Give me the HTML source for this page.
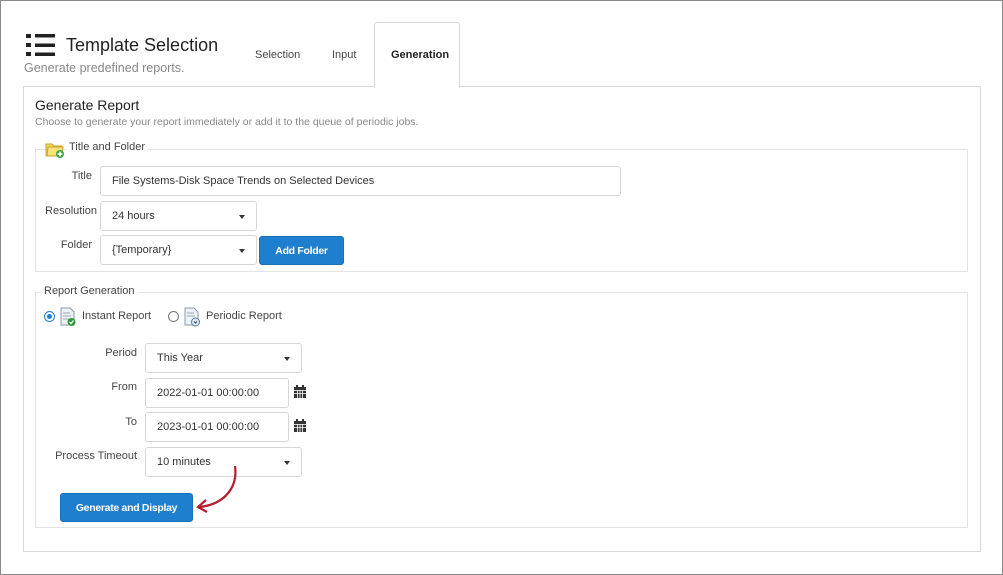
<!DOCTYPE html>
<html><head><style>
*{box-sizing:border-box;margin:0;padding:0}
body{width:1003px;height:575px;background:#fff;font-family:"Liberation Sans",sans-serif;position:relative;overflow:hidden;color:#333}
.a{position:absolute}
.frame{left:0;top:0;width:1003px;height:575px;border:1px solid #8a8a8a}
.lbl{font-size:11px;color:#444;text-align:right}
.inp{border:1px solid #d6d6d6;border-radius:3px;font-size:11px;color:#333;padding-left:11px;display:flex;align-items:center;background:#fff}
.sel::after{content:"";position:absolute;right:11px;top:13px;border:3.5px solid transparent;border-top:4px solid #333}
.btn{background:#1f7fcf;border:1px solid #1a6fb8;border-radius:3px;color:#fff;font-weight:bold;font-size:10.5px;letter-spacing:-0.3px;display:flex;align-items:center;justify-content:center}
.fs{border:1px solid #e3e3e3}
.leg{background:#fff;font-size:11px;color:#444;padding:0 3px}
</style></head><body>
<div class="a frame"></div>
<svg class="a" style="left:26px;top:34px" width="30" height="24" viewBox="0 0 30 24">
<rect x="0" y="0" width="5" height="4" fill="#222"/><rect x="9" y="0" width="20" height="3.5" fill="#222"/>
<rect x="0" y="9" width="5" height="4" fill="#222"/><rect x="9" y="9.5" width="20" height="3.5" fill="#222"/>
<rect x="0" y="18" width="5" height="4" fill="#222"/><rect x="9" y="18.5" width="20" height="3.5" fill="#222"/>
</svg>
<div class="a" style="left:66px;top:35px;font-size:18px;color:#222">Template Selection</div>
<div class="a" style="left:24px;top:61px;font-size:12.5px;color:#888">Generate predefined reports.</div>
<div class="a" style="left:255px;top:49px;font-size:11px;color:#444">Selection</div>
<div class="a" style="left:332px;top:49px;font-size:11px;color:#444">Input</div>
<div class="a" style="left:23px;top:86px;width:958px;height:466px;border:1px solid #d8d8d8"></div>
<div class="a" style="left:374px;top:22px;width:86px;height:66px;border:1px solid #d8d8d8;border-bottom:none;background:#fff;border-radius:3px 3px 0 0"></div>
<div class="a" style="left:391px;top:49px;font-size:11px;font-weight:bold;color:#222">Generation</div>
<div class="a" style="left:35px;top:97px;font-size:14px;color:#222">Generate Report</div>
<div class="a" style="left:35px;top:116px;font-size:10.5px;color:#888">Choose to generate your report immediately or add it to the queue of periodic jobs.</div>
<div class="a fs" style="left:35px;top:149px;width:933px;height:123px"></div>
<svg class="a" style="left:45px;top:140px" width="20" height="18" viewBox="0 0 20 18"><path d="M1 4h6l2 2h8v10H1z" fill="#f2d45a" stroke="#c9a52c"/><path d="M3 7h15l-1 9H2z" fill="#f8e27a" stroke="#c9a52c"/><circle cx="15" cy="14" r="4" fill="#3aa63a"/><path d="M15 11.5v5M12.5 14h5" stroke="#fff" stroke-width="1.6"/></svg>
<div class="a leg" style="left:66px;top:141px">Title and Folder</div>
<div class="a lbl" style="left:40px;top:170px;width:52px">Title</div>
<div class="a inp" style="left:100px;top:166px;width:521px;height:30px">File Systems-Disk Space Trends on Selected Devices</div>
<div class="a lbl" style="left:30px;top:205px;width:67px">Resolution</div>
<div class="a inp sel" style="left:100px;top:201px;width:157px;height:30px">24 hours</div>
<div class="a lbl" style="left:40px;top:239px;width:52px">Folder</div>
<div class="a inp sel" style="left:100px;top:235px;width:157px;height:30px">{Temporary}</div>
<div class="a btn" style="left:259px;top:236px;width:85px;height:29px">Add Folder</div>
<div class="a fs" style="left:35px;top:292px;width:933px;height:236px"></div>
<div class="a leg" style="left:41px;top:285px">Report Generation</div>
<div class="a" style="left:44px;top:311px;width:11px;height:11px;border-radius:50%;border:1px solid #1f7fcf;background:#fff"><div style="margin:2px;width:5px;height:5px;border-radius:50%;background:#1f7fcf"></div></div>
<svg class="a" style="left:59px;top:307px" width="18" height="20" viewBox="0 0 18 20"><path d="M2 1h9l4 4v13H2z" fill="#eef2f7" stroke="#8a98aa"/><path d="M4 6h7M4 9h8M4 12h6" stroke="#9aa"/><circle cx="12.5" cy="15" r="4" fill="#2a9a3a"/><path d="M10.5 15l1.5 1.5 2.5-3" stroke="#fff" stroke-width="1.3" fill="none"/></svg>
<div class="a" style="left:82px;top:310px;font-size:11px;color:#444">Instant Report</div>
<div class="a" style="left:168px;top:311px;width:11px;height:11px;border-radius:50%;border:1px solid #777;background:#fff"></div>
<svg class="a" style="left:183px;top:307px" width="18" height="20" viewBox="0 0 18 20"><path d="M2 1h9l4 4v13H2z" fill="#eef2f7" stroke="#8a98aa"/><path d="M4 6h7M4 9h8" stroke="#9aa"/><circle cx="12.5" cy="15" r="4" fill="#dfe8f3" stroke="#5a7aa0"/><path d="M11 14.5l1.5 1.5 1.5-1.5" stroke="#345" fill="none"/></svg>
<div class="a" style="left:206px;top:310px;font-size:11px;color:#444">Periodic Report</div>
<div class="a lbl" style="left:60px;top:347px;width:77px">Period</div>
<div class="a inp sel" style="left:145px;top:343px;width:157px;height:30px">This Year</div>
<div class="a lbl" style="left:60px;top:381px;width:77px">From</div>
<div class="a inp" style="left:145px;top:378px;width:144px;height:30px">2022-01-01 00:00:00</div>
<div class="a lbl" style="left:60px;top:416px;width:77px">To</div>
<div class="a inp" style="left:145px;top:412px;width:144px;height:30px">2023-01-01 00:00:00</div>
<svg class="a" style="left:293px;top:385px" width="14" height="14" viewBox="0 0 14 14"><rect x="1" y="2" width="12" height="11" fill="#333"/><rect x="3" y="0" width="2" height="3" fill="#333"/><rect x="9" y="0" width="2" height="3" fill="#333"/><path d="M1 5.5h12M1 8.5h12M4.5 5v8M7 5v8M9.5 5v8" stroke="#fff" stroke-width="0.8"/></svg>
<svg class="a" style="left:293px;top:419px" width="14" height="14" viewBox="0 0 14 14"><rect x="1" y="2" width="12" height="11" fill="#333"/><rect x="3" y="0" width="2" height="3" fill="#333"/><rect x="9" y="0" width="2" height="3" fill="#333"/><path d="M1 5.5h12M1 8.5h12M4.5 5v8M7 5v8M9.5 5v8" stroke="#fff" stroke-width="0.8"/></svg>
<div class="a lbl" style="left:40px;top:450px;width:97px">Process Timeout</div>
<div class="a inp sel" style="left:145px;top:447px;width:157px;height:30px">10 minutes</div>
<div class="a btn" style="left:60px;top:493px;width:133px;height:29px">Generate and Display</div>
<svg class="a" style="left:190px;top:462px" width="55" height="55" viewBox="0 0 55 55"><path d="M45 4C48 25 35 42 10 45" stroke="#b51c2e" stroke-width="2.2" fill="none"/><path d="M16 38L8 45l9 5" stroke="#b51c2e" stroke-width="2.2" fill="none"/></svg>
</body></html>
